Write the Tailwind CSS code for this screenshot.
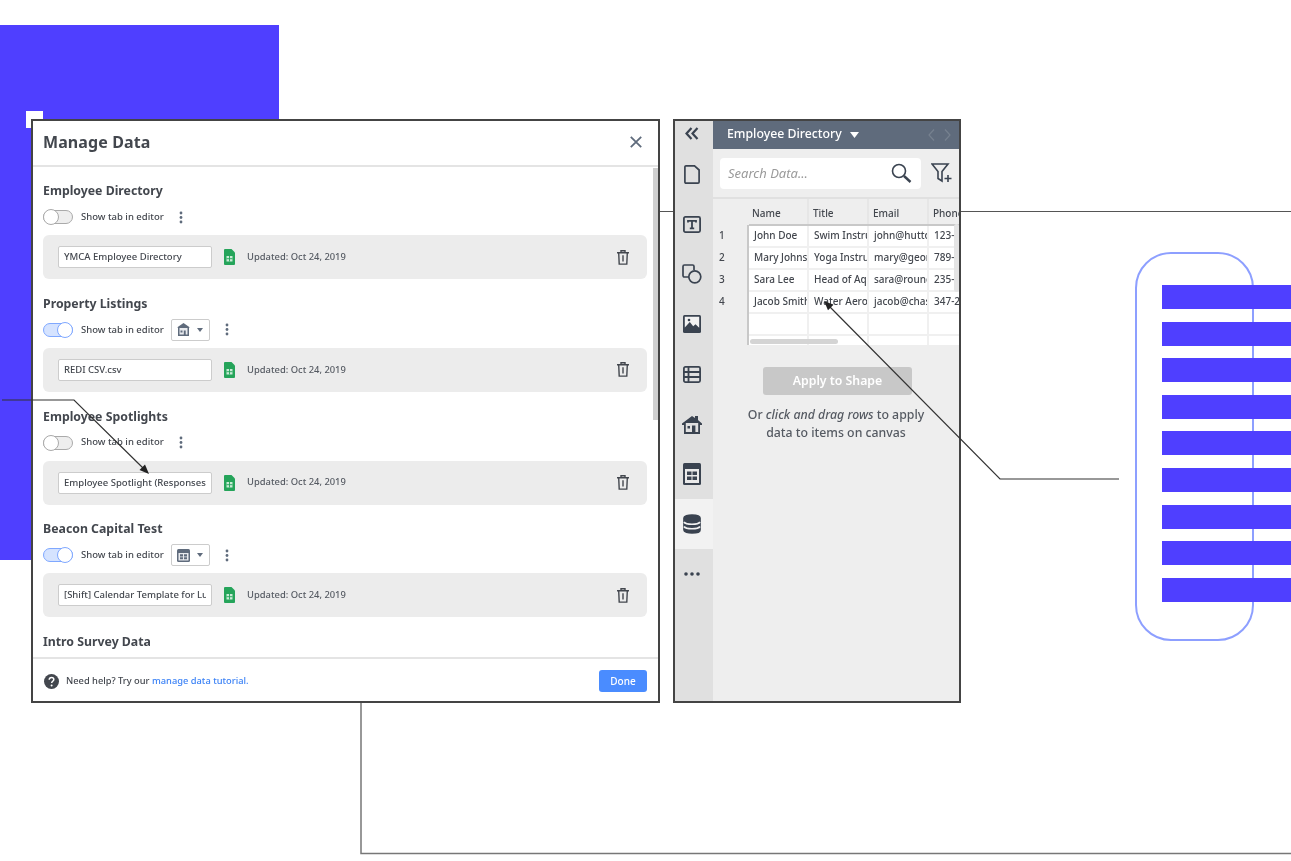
<!DOCTYPE html>
<html lang="en">
<head>
  <meta charset="UTF-8" />
  <title>Manage Data</title>
  <script src="https://cdn.jsdelivr.net/npm/@tailwindcss/browser@4"></script>
</head>
<body class="bg-white">
<div class="relative w-[1291px] h-[861px] overflow-hidden bg-white blur-[0.35px] font-['Noto_Sans',sans-serif] text-[#43474e]">

  <!-- decoration behind the windows -->
  <div class="absolute left-0 top-[25px] w-[279px] h-[535px] bg-[#4f3fff]"></div>
  <div class="absolute left-[26px] top-[111px] w-[17px] h-[17px] bg-white"></div>

  <!-- manage data dialog -->
  <div class="absolute left-[31px] top-[119px] w-[629px] h-[584px] border-2 border-[#444] bg-white flex flex-col">
    <div class="h-[46px] shrink-0 border-b-2 border-[#e4e4e4] flex items-center justify-between pl-[10px] pr-[16px] pb-[2px]">
      <h1 class="text-[16px] font-bold tracking-[0.1px]">Manage Data</h1>
      <svg class="w-[12px] h-[12px]" viewBox="0 0 12 12" fill="none" stroke="#5f6b7c" stroke-width="1.8"><path d="M.8.8l10.4 10.4M11.2.8L.8 11.2"/></svg>
    </div>

    <div class="relative flex-1 overflow-hidden pt-[14px] pl-[10px] pr-[11px]">
      <div class="absolute right-[0px] top-[1px] w-[5px] h-[252px] bg-[#cfcfcf]"></div>

      <section class="mb-[14.75px]">
        <h2 class="h-[20px] leading-[20px] text-[12.3px] font-bold">Employee Directory</h2>
        <div class="mt-[4px] h-[24px] flex items-center">
          <span class="relative w-[30px] h-[14px] rounded-full bg-[#eee] border border-[#aaa]"><span class="absolute -left-px -top-[2px] w-[16px] h-[16px] rounded-full bg-white border border-[#aaa]"></span></span>
          <span class="ml-[8px] text-[9.5px] font-medium w-[90px] whitespace-nowrap">Show tab in editor</span>
          <svg class="ml-[8px] w-[4px] h-[13px]" viewBox="0 0 4 13" fill="#5f6b7c"><circle cx="2" cy="2" r="1.4"/><circle cx="2" cy="6.5" r="1.4"/><circle cx="2" cy="11" r="1.4"/></svg>
        </div>
        <div class="mt-[6px] h-[44px] rounded-[6px] bg-[#ececec] flex items-center pl-[15px] pr-[18px]">
          <div class="w-[154px] h-[22px] bg-white border-[1.5px] border-[#ccc] rounded-[2px] px-[5px] text-[9.5px] font-medium leading-[19px]"><div class="overflow-hidden whitespace-nowrap">YMCA Employee Directory</div></div>
          <svg class="ml-[12px] w-[11px] h-[16px]" viewBox="0 0 11 16"><path d="M1 0h6.5L11 3.5V15a1 1 0 0 1-1 1H1a1 1 0 0 1-1-1V1a1 1 0 0 1 1-1z" fill="#25a45a"/><path d="M2.5 7h6v5.5h-6z" fill="#c9ebd6"/><path d="M5.5 7v5.5M2.5 9.7h6" stroke="#25a45a" stroke-width=".9"/></svg>
          <span class="ml-[12px] text-[9.4px] font-medium text-[#555a62] whitespace-nowrap">Updated: Oct 24, 2019</span>
          <svg class="ml-auto w-[12px] h-[15px]" viewBox="0 0 12 15" fill="none" stroke="#43474e" stroke-width="1.4"><path d="M0 2.7h12M4 2.5V.8h4v1.7M1.7 2.7l.5 11.4h7.6l.5-11.4M6 5.3v6.3"/></svg>
        </div>
      </section>

      <section class="mb-[14.75px]">
        <h2 class="h-[20px] leading-[20px] text-[12.3px] font-bold">Property Listings</h2>
        <div class="mt-[4px] h-[24px] flex items-center">
          <span class="relative w-[30px] h-[14px] rounded-full bg-[#d5e3ff] border border-[#7fa8ff]"><span class="absolute -right-px -top-[2px] w-[16px] h-[16px] rounded-full bg-white border border-[#7fa8ff]"></span></span>
          <span class="ml-[8px] text-[9.5px] font-medium w-[90px] whitespace-nowrap">Show tab in editor</span>
          <span class="w-[39px] h-[22px] bg-white border-[1.5px] border-[#ccc] rounded-[2px] flex items-center pl-[5px] gap-[7px]">
            <svg class="w-[13px] h-[13px]" viewBox="0 0 13 13"><path d="M6.5 0L13 4.5H12V13H1V4.5H0z" fill="#5f6b7c"/><path d="M2.5 5h8v6.5H8.7V7.5H6.800v4H2.5z" fill="#e8eaee"/><path d="M3.5 7.5h2v2h-2z" fill="#5f6b7c"/></svg>
            <svg class="w-[6px] h-[4px]" viewBox="0 0 6 4" fill="#5f6b7c"><path d="M0 0h6L3 4z"/></svg>
          </span>
          <svg class="ml-[15px] w-[4px] h-[13px]" viewBox="0 0 4 13" fill="#5f6b7c"><circle cx="2" cy="2" r="1.4"/><circle cx="2" cy="6.5" r="1.4"/><circle cx="2" cy="11" r="1.4"/></svg>
        </div>
        <div class="mt-[6px] h-[44px] rounded-[6px] bg-[#ececec] flex items-center pl-[15px] pr-[18px]">
          <div class="w-[154px] h-[22px] bg-white border-[1.5px] border-[#ccc] rounded-[2px] px-[5px] text-[9.5px] font-medium leading-[19px]"><div class="overflow-hidden whitespace-nowrap">REDI CSV.csv</div></div>
          <svg class="ml-[12px] w-[11px] h-[16px]" viewBox="0 0 11 16"><path d="M1 0h6.5L11 3.5V15a1 1 0 0 1-1 1H1a1 1 0 0 1-1-1V1a1 1 0 0 1 1-1z" fill="#25a45a"/><path d="M2.5 7h6v5.5h-6z" fill="#c9ebd6"/><path d="M5.5 7v5.5M2.5 9.7h6" stroke="#25a45a" stroke-width=".9"/></svg>
          <span class="ml-[12px] text-[9.4px] font-medium text-[#555a62] whitespace-nowrap">Updated: Oct 24, 2019</span>
          <svg class="ml-auto w-[12px] h-[15px]" viewBox="0 0 12 15" fill="none" stroke="#43474e" stroke-width="1.4"><path d="M0 2.7h12M4 2.5V.8h4v1.7M1.7 2.7l.5 11.4h7.6l.5-11.4M6 5.3v6.3"/></svg>
        </div>
      </section>

      <section class="mb-[14.75px]">
        <h2 class="h-[20px] leading-[20px] text-[12.3px] font-bold">Employee Spotlights</h2>
        <div class="mt-[4px] h-[24px] flex items-center">
          <span class="relative w-[30px] h-[14px] rounded-full bg-[#eee] border border-[#aaa]"><span class="absolute -left-px -top-[2px] w-[16px] h-[16px] rounded-full bg-white border border-[#aaa]"></span></span>
          <span class="ml-[8px] text-[9.5px] font-medium w-[90px] whitespace-nowrap">Show tab in editor</span>
          <svg class="ml-[8px] w-[4px] h-[13px]" viewBox="0 0 4 13" fill="#5f6b7c"><circle cx="2" cy="2" r="1.4"/><circle cx="2" cy="6.5" r="1.4"/><circle cx="2" cy="11" r="1.4"/></svg>
        </div>
        <div class="mt-[6px] h-[44px] rounded-[6px] bg-[#ececec] flex items-center pl-[15px] pr-[18px]">
          <div class="w-[154px] h-[22px] bg-white border-[1.5px] border-[#ccc] rounded-[2px] px-[5px] text-[9.5px] font-medium leading-[19px]"><div class="overflow-hidden whitespace-nowrap">Employee Spotlight (Responses)</div></div>
          <svg class="ml-[12px] w-[11px] h-[16px]" viewBox="0 0 11 16"><path d="M1 0h6.5L11 3.5V15a1 1 0 0 1-1 1H1a1 1 0 0 1-1-1V1a1 1 0 0 1 1-1z" fill="#25a45a"/><path d="M2.5 7h6v5.5h-6z" fill="#c9ebd6"/><path d="M5.5 7v5.5M2.5 9.7h6" stroke="#25a45a" stroke-width=".9"/></svg>
          <span class="ml-[12px] text-[9.4px] font-medium text-[#555a62] whitespace-nowrap">Updated: Oct 24, 2019</span>
          <svg class="ml-auto w-[12px] h-[15px]" viewBox="0 0 12 15" fill="none" stroke="#43474e" stroke-width="1.4"><path d="M0 2.7h12M4 2.5V.8h4v1.7M1.7 2.7l.5 11.4h7.6l.5-11.4M6 5.3v6.3"/></svg>
        </div>
      </section>

      <section class="mb-[14.75px]">
        <h2 class="h-[20px] leading-[20px] text-[12.3px] font-bold">Beacon Capital Test</h2>
        <div class="mt-[4px] h-[24px] flex items-center">
          <span class="relative w-[30px] h-[14px] rounded-full bg-[#d5e3ff] border border-[#7fa8ff]"><span class="absolute -right-px -top-[2px] w-[16px] h-[16px] rounded-full bg-white border border-[#7fa8ff]"></span></span>
          <span class="ml-[8px] text-[9.5px] font-medium w-[90px] whitespace-nowrap">Show tab in editor</span>
          <span class="w-[39px] h-[22px] bg-white border-[1.5px] border-[#ccc] rounded-[2px] flex items-center pl-[5px] gap-[7px]">
            <svg class="w-[13px] h-[13px]" viewBox="0 0 13 13"><rect width="13" height="13" rx="1.5" fill="#5f6b7c"/><path d="M1.5 4h10v7.5h-10z" fill="#e8eaee"/><path d="M3 5.3h3v2.2H3zM7 5.3h3v2.2H7zM3 8.3h3v2H3zM7 8.3h3v2H7z" fill="#5f6b7c"/></svg>
            <svg class="w-[6px] h-[4px]" viewBox="0 0 6 4" fill="#5f6b7c"><path d="M0 0h6L3 4z"/></svg>
          </span>
          <svg class="ml-[15px] w-[4px] h-[13px]" viewBox="0 0 4 13" fill="#5f6b7c"><circle cx="2" cy="2" r="1.4"/><circle cx="2" cy="6.5" r="1.4"/><circle cx="2" cy="11" r="1.4"/></svg>
        </div>
        <div class="mt-[6px] h-[44px] rounded-[6px] bg-[#ececec] flex items-center pl-[15px] pr-[18px]">
          <div class="w-[154px] h-[22px] bg-white border-[1.5px] border-[#ccc] rounded-[2px] px-[5px] text-[9.5px] font-medium leading-[19px]"><div class="overflow-hidden whitespace-nowrap">[Shift] Calendar Template for Luma</div></div>
          <svg class="ml-[12px] w-[11px] h-[16px]" viewBox="0 0 11 16"><path d="M1 0h6.5L11 3.5V15a1 1 0 0 1-1 1H1a1 1 0 0 1-1-1V1a1 1 0 0 1 1-1z" fill="#25a45a"/><path d="M2.5 7h6v5.5h-6z" fill="#c9ebd6"/><path d="M5.5 7v5.5M2.5 9.7h6" stroke="#25a45a" stroke-width=".9"/></svg>
          <span class="ml-[12px] text-[9.4px] font-medium text-[#555a62] whitespace-nowrap">Updated: Oct 24, 2019</span>
          <svg class="ml-auto w-[12px] h-[15px]" viewBox="0 0 12 15" fill="none" stroke="#43474e" stroke-width="1.4"><path d="M0 2.7h12M4 2.5V.8h4v1.7M1.7 2.7l.5 11.4h7.6l.5-11.4M6 5.3v6.3"/></svg>
        </div>
      </section>

      <section>
        <h2 class="h-[20px] leading-[20px] text-[12.3px] font-bold">Intro Survey Data</h2>
      </section>
    </div>

    <div class="h-[44px] shrink-0 border-t-2 border-[#e4e4e4] flex items-center pl-[11px] pr-[11px] pt-[2px]">
      <svg class="w-[15px] h-[15px]" viewBox="0 0 15 15"><circle cx="7.5" cy="7.5" r="7.5" fill="#43474e"/><path d="M5.2 5.8c0-1.400 1-2.200 2.300-2.200s2.300.8 2.300 2c0 1.700-2.100 1.600-2.100 3.300" fill="none" stroke="#fff" stroke-width="1.5"/><circle cx="7.6" cy="11.4" r="1" fill="#fff"/></svg>
      <span class="ml-[7px] text-[9.3px] font-medium whitespace-nowrap">Need help? Try our <a class="text-[#3b82f6]">manage data tutorial.</a></span>
      <button class="ml-auto w-[48px] h-[22px] rounded-[3px] bg-[#4a8cff] text-white text-[10px] font-medium">Done</button>
    </div>
  </div>

  <!-- data panel -->
  <div class="absolute left-[673px] top-[119px] w-[288px] h-[584px] border-2 border-[#444] bg-[#eeeeee] flex">
    <aside class="w-[38px] shrink-0 bg-[#e0e0e0] flex flex-col">
      <div class="h-[24px] flex items-center justify-center pr-[4px]">
        <svg class="w-[14px] h-[13px]" viewBox="0 0 14 13" fill="none" stroke="#3a4350" stroke-width="2.2"><path d="M6.5 1L1.5 6.5l5 5.500M12.500 1l-5 5.500 5 5.500"/></svg>
      </div>
      <div class="mt-[4px] h-[50px] flex items-center justify-center pr-[4px]">
        <svg class="w-[16px] h-[19px]" viewBox="0 0 16 19" fill="none" stroke="#3a4350" stroke-width="1.7"><path d="M2 .9h8.500L15.100 5v12a1.100 1.100 0 0 1-1.100 1.100H2A1.100 1.100 0 0 1 .9 17V2A1.100 1.100 0 0 1 2 .9z"/></svg>
      </div>
      <div class="h-[50px] flex items-center justify-center pr-[4px]">
        <svg class="w-[18px] h-[17px]" viewBox="0 0 18 17" fill="none" stroke="#3a4350" stroke-width="1.8"><rect x=".9" y=".9" width="16.2" height="15.2" rx="1.5"/><path d="M5 6.4V4.800h8v1.600M9 4.800v7.600M6.800 12.400h4.400"/></svg>
      </div>
      <div class="h-[50px] flex items-center justify-center pr-[4px]">
        <svg class="w-[20px] h-[20px]" viewBox="0 0 20 20" fill="none" stroke="#3a4350" stroke-width="1.7"><path d="M6.500 13H2.400A1.400 1.400 0 0 1 1 11.600V2.400A1.400 1.400 0 0 1 2.400 1h8.200A1.400 1.400 0 0 1 12 2.400V6"/><circle cx="12.8" cy="12.8" r="6"/></svg>
      </div>
      <div class="h-[50px] flex items-center justify-center pr-[4px]">
        <svg class="w-[18px] h-[18px]" viewBox="0 0 18 18"><rect width="18" height="18" rx="1.5" fill="#3a4350"/><path d="M1.800 1.800h14.400v11l-3.700-3.600-2.300 2-3.400-4.200-5 5.500z" fill="#f2f2f2"/><circle cx="6" cy="5" r="1.3" fill="#3a4350"/></svg>
      </div>
      <div class="h-[50px] flex items-center justify-center pr-[4px]">
        <svg class="w-[18px] h-[17px]" viewBox="0 0 18 17" fill="none" stroke="#3a4350" stroke-width="1.8"><rect x=".9" y=".9" width="16.2" height="15.2" rx="1.5"/><path d="M1 6h16M1 11h16M5.500 1v15"/></svg>
      </div>
      <div class="h-[50px] flex items-center justify-center pr-[4px]">
        <svg class="w-[20px] h-[19px]" viewBox="0 0 20 19"><path d="M10 1l3 2V1h3v4l4 3.500v1.500h-2v9H2v-9H0V8.500z" fill="#3a4350"/><path d="M3.800 8h12.400v9h-2.800v-6.500H10V17H3.800z" fill="#e0e0e0"/><path d="M5.500 11h2.500v2.500H5.500z" fill="#3a4350"/></svg>
      </div>
      <div class="h-[50px] flex items-center justify-center pr-[4px]">
        <svg class="w-[18px] h-[22px]" viewBox="0 0 18 22"><rect width="18" height="22" rx="1.5" fill="#3a4350"/><path d="M2 6h14v14H2z" fill="#eaeaea"/><path d="M4 8.500h4.500V12H4zM9.500 8.500H14V12H9.500zM4 13.500h4.500V17H4zM9.500 13.500H14V17H9.500z" fill="#3a4350"/></svg>
      </div>
      <div class="h-[50px] bg-[#f2f2f2] flex items-center justify-center pr-[4px]">
        <svg class="w-[18px] h-[20px]" viewBox="0 0 18 20" fill="none" stroke="#3a4350" stroke-width="1.7"><path d="M1 4c0-4 16-4 16 0v12c0 4-16 4-16 0z" fill="#3a4350"/><path d="M1 8c2 3 14 3 16 0M1 12.500c2 3 14 3 16 0" stroke="#f2f2f2"/></svg>
      </div>
      <div class="h-[50px] flex items-center justify-center pr-[4px]">
        <svg class="w-[16px] h-[4px]" viewBox="0 0 16 4" fill="#3a4350"><circle cx="2" cy="2" r="1.8"/><circle cx="8" cy="2" r="1.8"/><circle cx="14" cy="2" r="1.8"/></svg>
      </div>
    </aside>

    <main class="flex-1 min-w-0 flex flex-col">
      <div class="h-[28px] shrink-0 bg-[#5f6b7c] flex items-center pl-[14px] pr-[8px] pb-[1px]">
        <span class="text-[12.3px] font-medium text-white whitespace-nowrap">Employee Directory</span>
        <svg class="ml-[8px] w-[9px] h-[6px]" viewBox="0 0 9 6" fill="#fff"><path d="M0 0h9L4.500 6z"/></svg>
        <svg class="ml-auto w-[7px] h-[12px]" viewBox="0 0 7 12" fill="none" stroke="#76818f" stroke-width="1.2"><path d="M6 .5L1 6l5 5.500"/></svg>
        <svg class="ml-[9px] w-[7px] h-[12px]" viewBox="0 0 7 12" fill="none" stroke="#76818f" stroke-width="1.2"><path d="M1 .5L6 6l-5 5.500"/></svg>
      </div>

      <div class="h-[50px] shrink-0 border-b-2 border-[#e0e0e0] flex items-center pl-[7px]">
        <div class="w-[201px] h-[31px] rounded-[4px] bg-white flex items-center pl-[8px] pr-[9px]">
          <span class="mt-[1px] text-[13px] italic text-[#9a9a9a]">Search Data...</span>
          <svg class="ml-auto w-[21px] h-[21px]" viewBox="0 0 21 21" fill="none" stroke="#3a4350" stroke-width="1.6"><circle cx="8" cy="8" r="6.5"/><path d="M13 13l6.500 6" stroke-width="2.4"/></svg>
        </div>
        <svg class="ml-[10px] w-[22px] h-[21px]" viewBox="0 0 22 21" fill="none" stroke="#3a4350" stroke-width="1.6"><path d="M1 1h16l-6 7.500V18l-4-2.500v-7z"/><path d="M17 12v7M13.500 15.500h7"/></svg>
      </div>

      <!-- sheet preview -->
      <div class="relative h-[146px] shrink-0 overflow-hidden text-[10px] font-medium text-[#43474e]">
        <div class="flex h-[26px] leading-[28px]">
          <div class="w-[36px]"></div>
          <div class="w-[60px] pl-[3px] border-r-2 border-[#e6e6e6] whitespace-nowrap overflow-hidden">Name</div>
          <div class="w-[60px] pl-[4px] border-r-2 border-[#e6e6e6] whitespace-nowrap overflow-hidden">Title</div>
          <div class="w-[60px] pl-[4px] border-r-2 border-[#e6e6e6] whitespace-nowrap overflow-hidden">Email</div>
          <div class="w-[30px] pl-[4px] whitespace-nowrap overflow-hidden">Phone</div>
        </div>
        <div class="flex">
          <div class="w-[36px] shrink-0 pl-[6px] border-r-2 border-[#c8c8c8]">
            <div class="h-[22px] leading-[21px]">1</div>
            <div class="h-[22px] leading-[21px]">2</div>
            <div class="h-[22px] leading-[21px]">3</div>
            <div class="h-[22px] leading-[21px]">4</div>
            <div class="h-[22px]"></div>
            <div class="h-[12px]"></div>
          </div>
          <div class="flex-1 min-w-0 bg-white border-t-2 border-[#c8c8c8] -mt-[1px]">
            <div class="flex h-[22px] leading-[19px] border-b-2 border-[#f0f0f0]">
              <div class="w-[60px] pl-[5px] border-r-2 border-[#f0f0f0] whitespace-nowrap overflow-hidden">John Doe</div>
              <div class="w-[60px] pl-[5px] border-r-2 border-[#f0f0f0] whitespace-nowrap overflow-hidden">Swim Instructor</div>
              <div class="w-[60px] pl-[5px] border-r-2 border-[#f0f0f0] whitespace-nowrap overflow-hidden">john@hutton.com</div>
              <div class="w-[30px] pl-[5px] whitespace-nowrap overflow-hidden">123-456-7890</div>
            </div>
            <div class="flex h-[22px] leading-[19px] border-b-2 border-[#f0f0f0]">
              <div class="w-[60px] pl-[5px] border-r-2 border-[#f0f0f0] whitespace-nowrap overflow-hidden">Mary Johnson</div>
              <div class="w-[60px] pl-[5px] border-r-2 border-[#f0f0f0] whitespace-nowrap overflow-hidden">Yoga Instructor</div>
              <div class="w-[60px] pl-[5px] border-r-2 border-[#f0f0f0] whitespace-nowrap overflow-hidden">mary@george.com</div>
              <div class="w-[30px] pl-[5px] whitespace-nowrap overflow-hidden">789-012-3456</div>
            </div>
            <div class="flex h-[22px] leading-[19px] border-b-2 border-[#f0f0f0]">
              <div class="w-[60px] pl-[5px] border-r-2 border-[#f0f0f0] whitespace-nowrap overflow-hidden">Sara Lee</div>
              <div class="w-[60px] pl-[5px] border-r-2 border-[#f0f0f0] whitespace-nowrap overflow-hidden">Head of Aquatics</div>
              <div class="w-[60px] pl-[5px] border-r-2 border-[#f0f0f0] whitespace-nowrap overflow-hidden">sara@round.com</div>
              <div class="w-[30px] pl-[5px] whitespace-nowrap overflow-hidden">235-867-5309</div>
            </div>
            <div class="flex h-[22px] leading-[19px] border-b-2 border-[#f0f0f0]">
              <div class="w-[60px] pl-[5px] border-r-2 border-[#f0f0f0] whitespace-nowrap overflow-hidden">Jacob Smith</div>
              <div class="w-[60px] pl-[5px] border-r-2 border-[#f0f0f0] whitespace-nowrap overflow-hidden">Water Aerobics</div>
              <div class="w-[60px] pl-[5px] border-r-2 border-[#f0f0f0] whitespace-nowrap overflow-hidden">jacob@chase.com</div>
              <div class="w-[30px] pl-[5px] whitespace-nowrap overflow-hidden">347-295-1120</div>
            </div>
            <div class="flex h-[22px] border-b-2 border-[#f0f0f0]">
              <div class="w-[60px] border-r-2 border-[#f0f0f0]"></div>
              <div class="w-[60px] border-r-2 border-[#f0f0f0]"></div>
              <div class="w-[60px] border-r-2 border-[#f0f0f0]"></div>
            </div>
            <div class="flex h-[12px]">
              <div class="w-[60px] border-r-2 border-[#f0f0f0]"></div>
              <div class="w-[60px] border-r-2 border-[#f0f0f0]"></div>
              <div class="w-[60px] border-r-2 border-[#f0f0f0]"></div>
            </div>
          </div>
        </div>
        <div class="absolute left-[37px] top-[140px] w-[88px] h-[5px] rounded-full bg-[#d4d4d4]"></div>
        <div class="absolute right-0 top-[25px] w-[5px] h-[68px] rounded-full bg-[#e4e4e4]"></div>
      </div>

      <button class="mt-[22px] ml-[50px] w-[149px] h-[28px] rounded-[3px] bg-[#c8c8c8] text-white text-[12.3px] font-semibold">Apply to Shape</button>
      <p class="mt-[11px] text-center text-[12.3px] font-medium leading-[18px] text-[#555a62]">Or <em>click and drag rows</em> to apply<br>data to items on canvas</p>
    </main>
  </div>

  <!-- rounded frame with the stacked bars -->
  <div class="absolute left-[1135px] top-[252px] w-[119px] h-[389px] rounded-[36px] border-2 border-[#8d9fff]"></div>
  <div class="absolute left-[1162px] top-[285px] w-[129px] flex flex-col gap-[12.6px]">
    <div class="h-[24px] bg-[#4f3fff]"></div>
    <div class="h-[24px] bg-[#4f3fff]"></div>
    <div class="h-[24px] bg-[#4f3fff]"></div>
    <div class="h-[24px] bg-[#4f3fff]"></div>
    <div class="h-[24px] bg-[#4f3fff]"></div>
    <div class="h-[24px] bg-[#4f3fff]"></div>
    <div class="h-[24px] bg-[#4f3fff]"></div>
    <div class="h-[24px] bg-[#4f3fff]"></div>
    <div class="h-[24px] bg-[#4f3fff]"></div>
  </div>

  <!-- connector lines on top of everything -->
  <svg class="absolute inset-0 pointer-events-none" width="1291" height="861" viewBox="0 0 1291 861" fill="none">
    <path d="M2 400H74L143 468" stroke="#333" stroke-width="1.2"/>
    <path d="M149 474l-9.500-4 5.500-5.500z" fill="#222"/>
    <path d="M660 211.500H673M961 211.500H1291" stroke="#555" stroke-width="1.2"/>
    <path d="M1119 479H1000L830 307" stroke="#333" stroke-width="1.2"/>
    <path d="M824 301l9.500 3.800-5.500 5.500z" fill="#222"/>
    <path d="M361 703V853.500H1291" stroke="#777" stroke-width="1.5"/>
  </svg>
</div>
</body>
</html>
